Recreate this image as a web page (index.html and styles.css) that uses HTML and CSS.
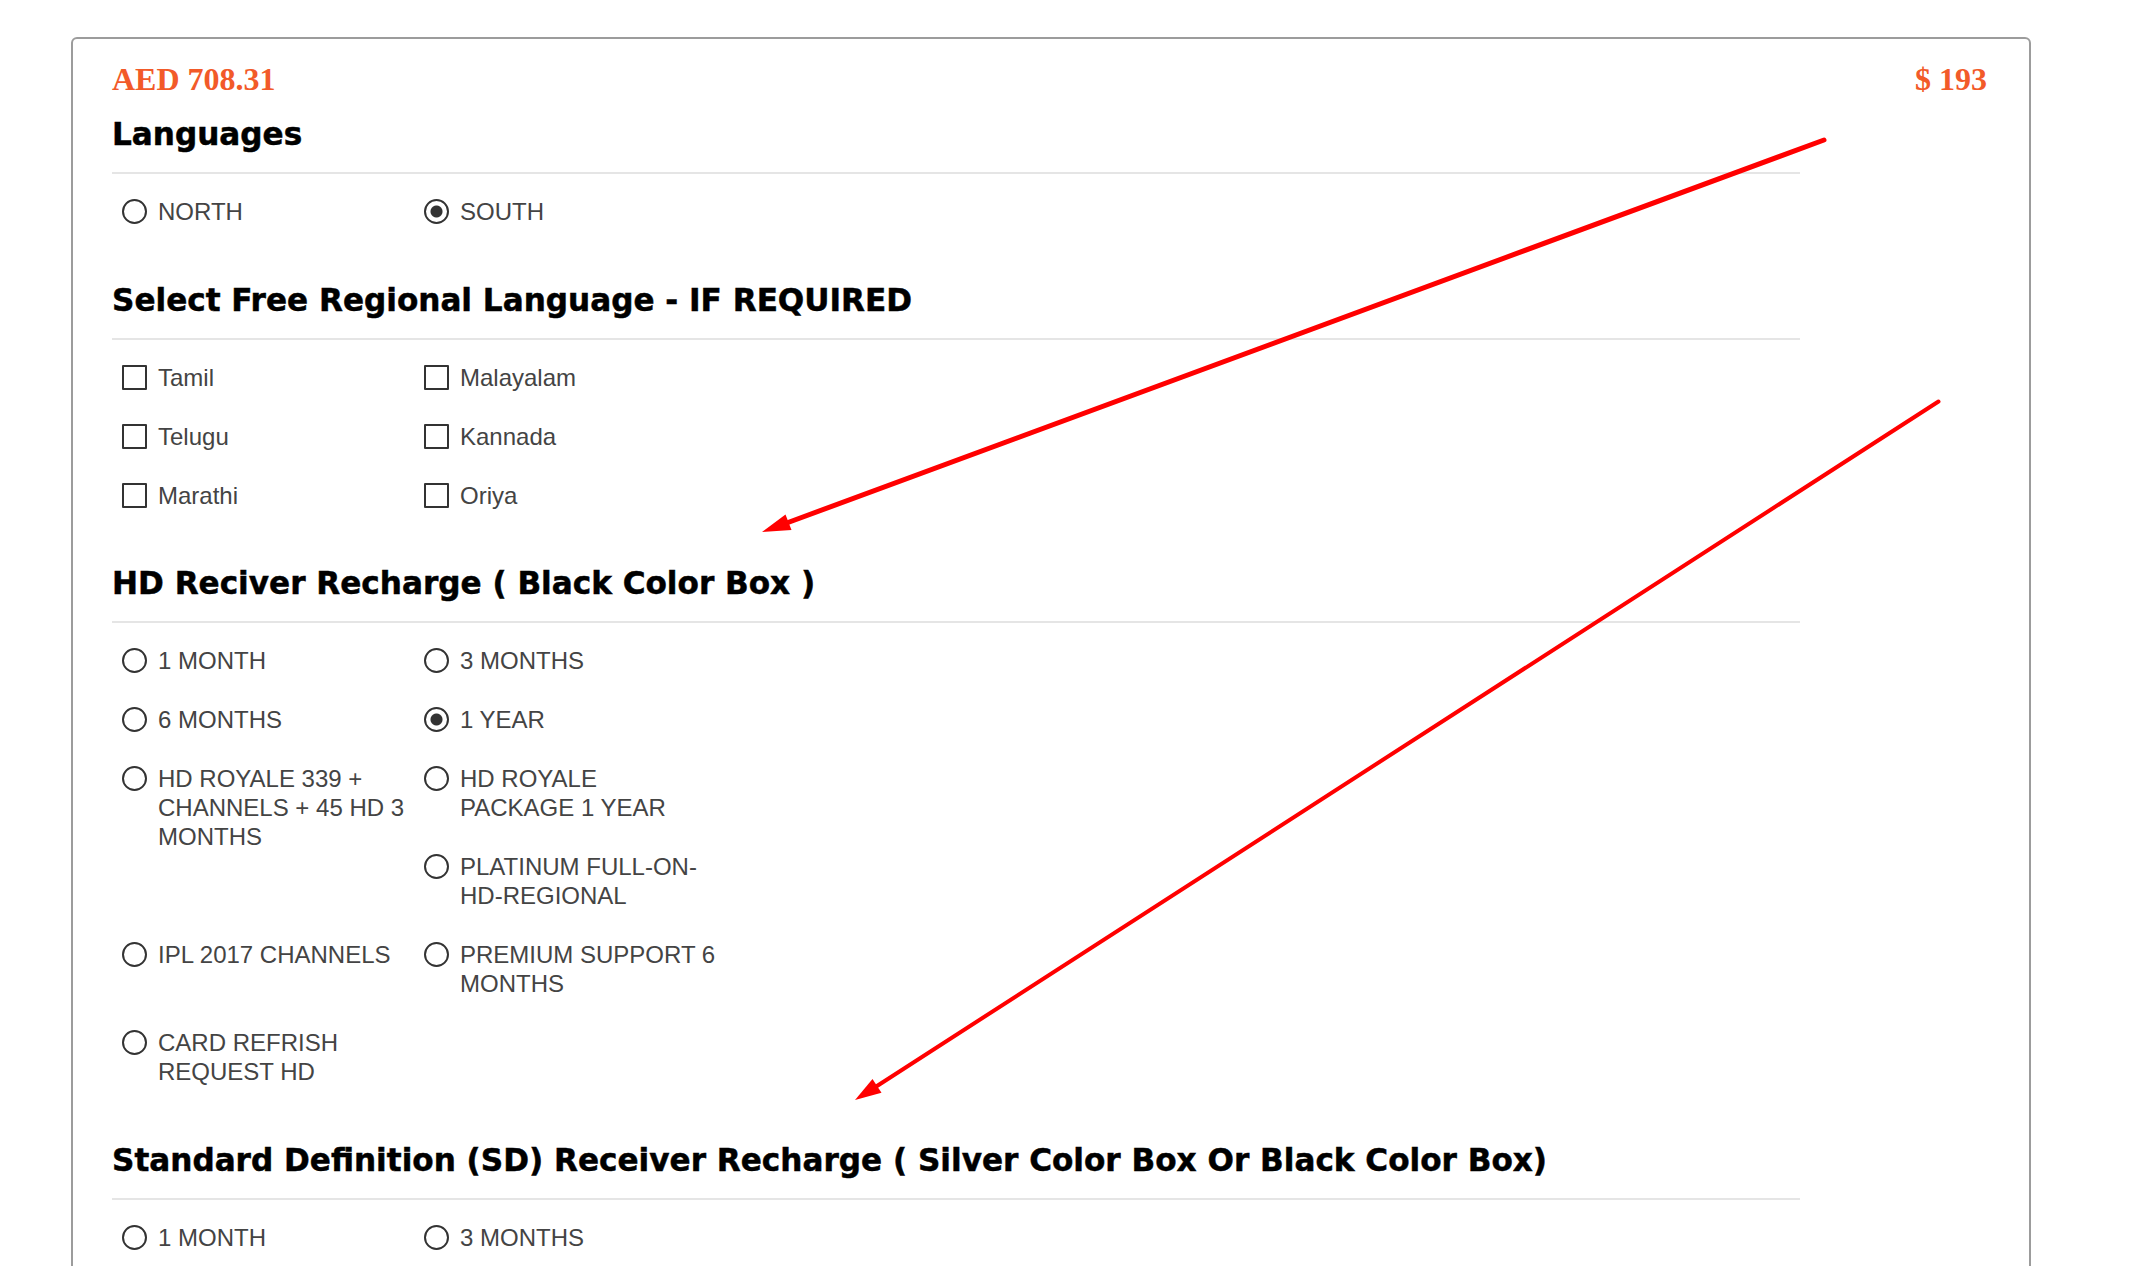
FILE: index.html
```html
<!DOCTYPE html>
<html lang="en">
<head>
<meta charset="utf-8">
<title>Recharge Options</title>
<link rel="stylesheet" href="styles.css">
</head>
<body>
<div class="page">
  <div class="card">
    <div class="price-row">
      <span class="price">AED 708.31</span>
      <span class="price">$ 193</span>
    </div>

    <div class="section first">
      <h2 class="section-title">Languages</h2>
      <div class="options">
        <label class="opt"><input type="radio" name="lang"><span class="txt">NORTH</span></label>
        <label class="opt"><input type="radio" name="lang" checked><span class="txt">SOUTH</span></label>
      </div>
    </div>

    <div class="section">
      <h2 class="section-title">Select Free Regional Language - IF REQUIRED</h2>
      <div class="options">
        <label class="opt"><input type="checkbox" class="check"><span class="txt">Tamil</span></label>
        <label class="opt"><input type="checkbox" class="check"><span class="txt">Malayalam</span></label>
        <label class="opt"><input type="checkbox" class="check"><span class="txt">Telugu</span></label>
        <label class="opt"><input type="checkbox" class="check"><span class="txt">Kannada</span></label>
        <label class="opt"><input type="checkbox" class="check"><span class="txt">Marathi</span></label>
        <label class="opt"><input type="checkbox" class="check"><span class="txt">Oriya</span></label>
      </div>
    </div>

    <div class="section">
      <h2 class="section-title">HD Reciver Recharge ( Black Color Box )</h2>
      <div class="options">
        <label class="opt"><input type="radio" name="hd"><span class="txt">1 MONTH</span></label>
        <label class="opt"><input type="radio" name="hd"><span class="txt">3 MONTHS</span></label>
        <label class="opt"><input type="radio" name="hd"><span class="txt">6 MONTHS</span></label>
        <label class="opt"><input type="radio" name="hd" checked><span class="txt">1 YEAR</span></label>
        <label class="opt"><input type="radio" name="hd"><span class="txt">HD ROYALE 339 + CHANNELS + 45 HD 3 MONTHS</span></label>
        <label class="opt"><input type="radio" name="hd"><span class="txt">HD ROYALE PACKAGE 1 YEAR</span></label>
        <label class="opt"><input type="radio" name="hd"><span class="txt">PLATINUM FULL-ON-HD-REGIONAL</span></label>
        <label class="opt"><input type="radio" name="hd"><span class="txt">IPL 2017 CHANNELS</span></label>
        <label class="opt"><input type="radio" name="hd"><span class="txt">PREMIUM SUPPORT 6 MONTHS</span></label>
        <label class="opt"><input type="radio" name="hd"><span class="txt">CARD REFRISH REQUEST HD</span></label>
      </div>
    </div>

    <div class="section">
      <h2 class="section-title">Standard Definition (SD) Receiver Recharge ( Silver Color Box Or Black Color Box)</h2>
      <div class="options">
        <label class="opt"><input type="radio" name="sd"><span class="txt">1 MONTH</span></label>
        <label class="opt"><input type="radio" name="sd"><span class="txt">3 MONTHS</span></label>
      </div>
    </div>
  </div>
</div>

<svg class="annotations" width="2147" height="1266" viewBox="0 0 2147 1266" aria-hidden="true">
  <line x1="1824" y1="140" x2="788" y2="522.5" stroke="#ff0000" stroke-width="5" stroke-linecap="round"/>
  <polygon points="762,532 791.5,530 785.5,514.5" fill="#ff0000"/>
  <line x1="1938.5" y1="401.5" x2="877" y2="1086" stroke="#ff0000" stroke-width="4" stroke-linecap="round"/>
  <polygon points="855,1100 881.5,1092.8 872.5,1079" fill="#ff0000"/>
</svg>
</body>
</html>
```

FILE: styles.css
```css
html, body {
  margin: 0;
  padding: 0;
  background: #ffffff;
  overflow: hidden;
}

body {
  position: relative;
  font-family: "Liberation Sans", Arial, sans-serif;
  color: #444444;
}

.page {
  padding: 37px 0 0 71px;
}

.card {
  box-sizing: border-box;
  width: 1960px;
  min-height: 1300px;
  border: 2px solid #9c9c9c;
  border-radius: 6px;
  padding: 22px 42px 0 39px;
  background: #ffffff;
}

.price-row {
  display: flex;
  justify-content: space-between;
  align-items: flex-start;
}

.price {
  font-family: "Liberation Serif", "Times New Roman", serif;
  font-weight: bold;
  font-size: 32px;
  line-height: 36px;
  color: #f25a29;
}

.section {
  width: 1688px;
  margin-top: 40.5px;
}

.section.first {
  margin-top: 19px;
}

.section-title {
  margin: 0;
  font-family: "DejaVu Sans", "Liberation Sans", sans-serif;
  font-weight: bold;
  font-size: 31.1px;
  line-height: 36px;
  color: #000000;
  -webkit-text-stroke: 0.5px #000000;
  padding-bottom: 20px;
  border-bottom: 2px solid #e5e5e5;
}

.options {
  display: flow-root;
  width: 604px;
  padding-top: 8px;
}

.opt {
  float: left;
  box-sizing: border-box;
  width: 302px;
  margin: 15px 0;
  padding-left: 10px;
  display: flex;
  align-items: flex-start;
  font-size: 24px;
  line-height: 29px;
  color: #444444;
}

.opt input {
  -webkit-appearance: none;
  appearance: none;
  flex: none;
  box-sizing: border-box;
  width: 25px;
  height: 25px;
  margin: 2px 11px 0 0;
  border: 2px solid #333333;
  border-radius: 50%;
  background: #ffffff;
}

.opt input:checked {
  background: radial-gradient(circle, #333333 0 5.5px, #ffffff 6.5px);
}

.opt input.check {
  border-radius: 1px;
  border-width: 2.5px;
}

.txt {
  flex: none;
  width: 256px;
}

.annotations {
  position: absolute;
  top: 0;
  left: 0;
  pointer-events: none;
}
```
